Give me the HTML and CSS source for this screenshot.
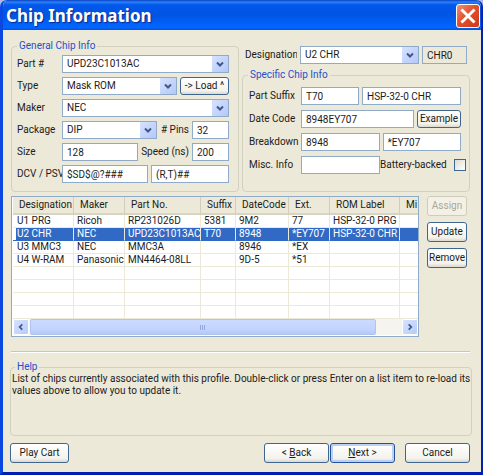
FILE: index.html
```html
<!DOCTYPE html>
<html lang="en">
<head>
<meta charset="utf-8">
<title>Chip Information</title>
<link rel="stylesheet" href="styles.css">
</head>
<body>
<div class="window">
  <header class="titlebar">
    <h1>Chip Information</h1>
    <button class="close" type="button" aria-label="Close">
      <svg viewBox="0 0 24 24" aria-hidden="true"><path d="M6 6L18 18M18 6L6 18" stroke="#fff" stroke-width="3.2" stroke-linecap="square"/></svg>
    </button>
  </header>

  <main class="content">
    <div class="panels">
      <fieldset class="general">
        <legend>General Chip Info</legend>
        <div class="row">
          <label for="part">Part #</label>
          <span class="combo grow"><select id="part"><option>UPD23C1013AC</option></select><svg viewBox="0 0 16 16" aria-hidden="true"><path d="M5 6.5L8 9.5L11 6.5"/></svg></span>
        </div>
        <div class="row">
          <label for="type">Type</label>
          <span class="combo grow"><select id="type"><option>Mask ROM</option></select><svg viewBox="0 0 16 16" aria-hidden="true"><path d="M5 6.5L8 9.5L11 6.5"/></svg></span>
          <button class="btn load" type="button">-&gt; Load ^</button>
        </div>
        <div class="row">
          <label for="maker">Maker</label>
          <span class="combo grow"><select id="maker"><option>NEC</option></select><svg viewBox="0 0 16 16" aria-hidden="true"><path d="M5 6.5L8 9.5L11 6.5"/></svg></span>
        </div>
        <div class="row">
          <label for="package">Package</label>
          <span class="combo package"><select id="package"><option>DIP</option></select><svg viewBox="0 0 16 16" aria-hidden="true"><path d="M5 6.5L8 9.5L11 6.5"/></svg></span>
          <label class="mid" for="pins"># Pins</label>
          <input class="short" id="pins" type="text" value="32">
        </div>
        <div class="row">
          <label for="size">Size</label>
          <input class="size" id="size" type="text" value="128">
          <label class="mid" for="speed">Speed (ns)</label>
          <input class="short" id="speed" type="text" value="200">
        </div>
        <div class="row">
          <label for="dcv">DCV / PSV</label>
          <input class="grow" id="dcv" type="text" value="$SD$@?###">
          <input class="psv" type="text" aria-label="PSV" value="(R,T)##">
        </div>
      </fieldset>

      <div class="side">
        <div class="row designation">
          <label for="designation">Designation</label>
          <span class="combo grow"><select id="designation"><option>U2 CHR</option></select><svg viewBox="0 0 16 16" aria-hidden="true"><path d="M5 6.5L8 9.5L11 6.5"/></svg></span>
          <input class="code" type="text" aria-label="Designation code" value="CHR0" readonly>
        </div>
        <fieldset class="specific">
          <legend>Specific Chip Info</legend>
          <div class="row">
            <label for="suffix">Part Suffix</label>
            <input class="suffix" id="suffix" type="text" value="T70">
            <input class="grow" type="text" aria-label="ROM label" value="HSP-32-0 CHR">
          </div>
          <div class="row">
            <label for="datecode">Date Code</label>
            <input class="grow" id="datecode" type="text" value="8948EY707">
            <button class="btn example" type="button">Example</button>
          </div>
          <div class="row">
            <label for="breakdown">Breakdown</label>
            <input class="grow" id="breakdown" type="text" value="8948">
            <input class="grow" type="text" aria-label="Extension" value="*EY707">
          </div>
          <div class="row battery">
            <label for="misc">Misc. Info</label>
            <input class="misc" id="misc" type="text">
            <label class="check-label" for="battery">Battery-backed</label>
            <input id="battery" type="checkbox">
          </div>
        </fieldset>
      </div>
    </div>

    <div class="list-area">
      <div class="list">
        <table>
          <colgroup><col class="c1"><col class="c2"><col class="c3"><col class="c4"><col class="c5"><col class="c6"><col class="c7"><col></colgroup>
          <thead>
            <tr><th>Designation</th><th>Maker</th><th>Part No.</th><th>Suffix</th><th>DateCode</th><th>Ext.</th><th>ROM Label</th><th>Mi</th></tr>
          </thead>
          <tbody>
            <tr><td>U1 PRG</td><td>Ricoh</td><td>RP231026D</td><td>5381</td><td>9M2</td><td>77</td><td>HSP-32-0 PRG</td><td></td></tr>
            <tr class="selected"><td>U2 CHR</td><td>NEC</td><td>UPD23C1013AC</td><td>T70</td><td>8948</td><td>*EY707</td><td>HSP-32-0 CHR</td><td></td></tr>
            <tr><td>U3 MMC3</td><td>NEC</td><td>MMC3A</td><td></td><td>8946</td><td>*EX</td><td></td><td></td></tr>
            <tr><td>U4 W-RAM</td><td>Panasonic</td><td>MN4464-08LL</td><td></td><td>9D-5</td><td>*51</td><td></td><td></td></tr>
            <tr><td></td><td></td><td></td><td></td><td></td><td></td><td></td><td></td></tr>
            <tr><td></td><td></td><td></td><td></td><td></td><td></td><td></td><td></td></tr>
            <tr><td></td><td></td><td></td><td></td><td></td><td></td><td></td><td></td></tr>
            <tr><td></td><td></td><td></td><td></td><td></td><td></td><td></td><td></td></tr>
          </tbody>
        </table>
        <div class="scrollbar">
          <button type="button" aria-label="Scroll left"><svg viewBox="0 0 16 16" aria-hidden="true"><path d="M9.5 5L6.5 8L9.5 11"/></svg></button>
          <div class="track"><div class="thumb"><i></i><i></i><i></i></div></div>
          <button type="button" aria-label="Scroll right"><svg viewBox="0 0 16 16" aria-hidden="true"><path d="M6.5 5L9.5 8L6.5 11"/></svg></button>
        </div>
      </div>
      <div class="actions">
        <button class="btn" type="button" disabled>Assign</button>
        <button class="btn" type="button">Update</button>
        <button class="btn" type="button">Remove</button>
      </div>
    </div>

    <hr>

    <fieldset class="help">
      <legend>Help</legend>
      <p>List of chips currently associated with this profile. Double-click or press Enter on a list item to re-load its values above to allow you to update it.</p>
    </fieldset>

    <footer class="footer">
      <button class="btn play" type="button">Play Cart</button>
      <button class="btn" type="button">&lt; <u>B</u>ack</button>
      <button class="btn default" type="button"><u>N</u>ext &gt;</button>
      <button class="btn cancel" type="button">Cancel</button>
    </footer>
  </main>
</div>
</body>
</html>
```

FILE: styles.css
```css
* { box-sizing: border-box; }

body {
  margin: 0;
  background: #a9b8e8;
  color: #1c1c1c;
  font: 10px/12px Roboto, "DejaVu Sans Condensed", sans-serif;
}

button, input, select {
  margin: 0;
  font: inherit;
  color: inherit;
}

.window {
  display: flex;
  flex-direction: column;
  min-height: 100vh;
  border: solid #0831d9;
  border-width: 0 2px 3px 3px;
  border-color: #0020b0 #0020b0 #0020b0 #0a48e0;
  border-radius: 7px 7px 0 0;
  background: #ece9d8;
  overflow: hidden;
}

.titlebar {
  display: flex;
  align-items: center;
  justify-content: space-between;
  height: 30px;
  margin-left: -3px;
  padding: 1px 0 0 6px;
  background: linear-gradient(#0a3fc0 0, #2a80f8 2px, #0058ea 5px, #0054e3 15px, #0062fa 24px, #0066ff 28px, #0050d8 30px);
}

.titlebar h1 {
  margin: 0;
  color: #fff;
  font: bold 17px/26px "Noto Sans", sans-serif;
  text-shadow: 1px 1px 1px #0a2a8c;
}

.close {
  width: 24px;
  height: 24px;
  margin-right: 1px;
  padding: 0;
  border: 1px solid #fff;
  border-radius: 3px;
  background: linear-gradient(135deg, #f0907a, #e4502c 45%, #c83c14);
}

.close svg {
  display: block;
  width: 22px;
  height: 22px;
}

.content { padding: 10px 11px 0 8px; }

.panels {
  display: grid;
  grid-template-columns: minmax(0, 1fr) minmax(0, 1fr);
  gap: 3px;
}

fieldset {
  min-width: 0;
  margin: 0;
  border: 1px solid #d2d0be;
  border-radius: 4px;
}

legend {
  margin: 0;
  padding: 0 2px;
  color: #2450cc;
}

.general {
  display: flex;
  flex-direction: column;
  gap: 4px;
  padding: 3px 9px 8px 5px;
}

.row {
  display: flex;
  align-items: center;
  gap: 3px;
  height: 18px;
}

.row > label:first-child {
  flex: none;
  overflow: hidden;
  white-space: nowrap;
}

.general .row > label:first-child {
  width: 45px;
  margin-right: -3px;
}

.grow { flex: 1 1 0; }

input[type="text"], select {
  min-width: 0;
  height: 18px;
  padding: 0 4px;
  border: 1px solid #8fabc8;
  border-radius: 0;
  background: #fff;
}

.combo {
  position: relative;
  display: flex;
  min-width: 0;
}

.combo select {
  width: 100%;
  padding: 0 18px 0 4px;
  appearance: none;
}

.combo svg {
  position: absolute;
  top: 1px;
  right: 1px;
  width: 16px;
  height: 16px;
  background: linear-gradient(135deg, #d6e2ff, #b4c8f8);
  pointer-events: none;
}

.combo path, .scrollbar path {
  fill: none;
  stroke: #405888;
  stroke-width: 2;
}

.btn {
  height: 20px;
  padding: 0;
  border: 1px solid #3f6690;
  border-radius: 3px;
  background: linear-gradient(#fff, #f3f2ec 80%, #dcd8cc);
  white-space: nowrap;
}

.btn:disabled {
  border-color: #cfccbc;
  background: #f3f1e6;
  color: #aaa798;
}

.row .btn { height: 18px; }
.load { width: 49px; }
.package { width: 95px; }
.size { width: 76px; }
.short { width: 37px; }
.psv { width: 78px; }

.mid {
  flex: 1;
  text-align: right;
  white-space: nowrap;
}

.side {
  display: flex;
  flex-direction: column;
  gap: 5px;
  padding-top: 6px;
}

.designation { padding: 0 3px; }
.designation > label:first-child { width: 52px; }
.designation .code {
  width: 45px;
  background: #ece9d8;
}

.specific {
  flex: 1;
  padding: 6px 3px 0 5px;
}

.specific .row {
  margin-bottom: 5px;
  padding: 0 5px 0 1px;
}

.specific .row > label:first-child {
  width: 52px;
  margin-right: -3px;
}

.suffix { width: 58px; }
.example { width: 44px; }
.misc { width: 79px; }

.specific .battery { gap: 0; padding-right: 0; }
.specific .battery > label:first-child { margin-right: 0; }
.check-label { flex: 1; white-space: nowrap; }

input[type="checkbox"] {
  width: 12px;
  height: 12px;
  appearance: none;
  border: 1px solid #3f6690;
  background: linear-gradient(135deg, #dcdcd4, #fff);
}

.list-area {
  display: flex;
  gap: 8px;
  margin-top: 4px;
}

.list {
  flex: 1;
  min-width: 0;
  padding: 0 0 1px 1px;
  border: 1px solid #8fabc8;
  background: #fff;
  overflow: hidden;
}

table {
  width: 100%;
  table-layout: fixed;
  border-collapse: separate;
  border-spacing: 0;
}

.c1 { width: 61px; }
.c2 { width: 51px; }
.c3 { width: 76px; }
.c4 { width: 35px; }
.c5 { width: 53px; }
.c6 { width: 41px; }
.c7 { width: 70px; }

th, td {
  overflow: hidden;
  font-weight: normal;
  text-align: left;
  white-space: nowrap;
}

th {
  height: 18px;
  padding: 0 0 0 6px;
  border-right: 1px solid #d0cdbc;
  border-bottom: 2px solid #d8d4c2;
  background: #ece9d8;
}

td {
  height: 13px;
  padding: 0 0 0 3px;
  border-right: 1px solid #ece9d8;
  border-bottom: 1px solid #ece9d8;
}

td:first-child { padding-left: 4px; }
th:last-child, td:last-child { border-right: 0; }

.selected td {
  background: #316ac5;
  border-bottom-color: #316ac5;
  color: #fff;
}

.selected td:first-child { box-shadow: inset 3px 0 #fff; }

.scrollbar {
  display: flex;
  height: 16px;
  background: #f5f4ef;
}

.scrollbar button {
  width: 16px;
  height: 16px;
  padding: 0;
  border: 1px solid #fff;
  border-radius: 2px;
  background: linear-gradient(135deg, #d6e2ff, #b8ccfa);
}

.scrollbar svg { display: block; width: 14px; height: 14px; }

.track { flex: 1; padding-left: 1px; }

.thumb {
  display: flex;
  align-items: center;
  justify-content: center;
  gap: 1px;
  width: 93%;
  height: 16px;
  border: 1px solid #b0c4f0;
  border-radius: 2px;
  background: linear-gradient(#ccdaff, #c2d3fd 70%, #b4c8f6);
}

.thumb i {
  width: 1px;
  height: 5px;
  background: #8fa8e0;
}

.actions {
  display: flex;
  flex-direction: column;
  gap: 6px;
  width: 40px;
  margin-right: 3px;
}

hr {
  width: 100%;
  height: 2px;
  margin: 14px 0 8px;
  border: solid;
  border-width: 1px 0;
  border-color: #c9c6b6 #fff #fff;
}

.help {
  min-height: 75px;
  margin: 0 -2px 0 -1px;
  padding: 0 0 0 1px;
}

.help legend { margin-left: 3px; }
.help p { margin: 0; }

.footer {
  display: flex;
  gap: 1px;
  margin: 7px 0 0 -1px;
}

.footer .btn { width: 65px; }
.footer .play { width: 59px; margin-right: auto; }
.footer .cancel { margin-left: 9px; }
.default { border-color: #24509c; box-shadow: inset 0 0 0 2px #bcd0f4; }
```
